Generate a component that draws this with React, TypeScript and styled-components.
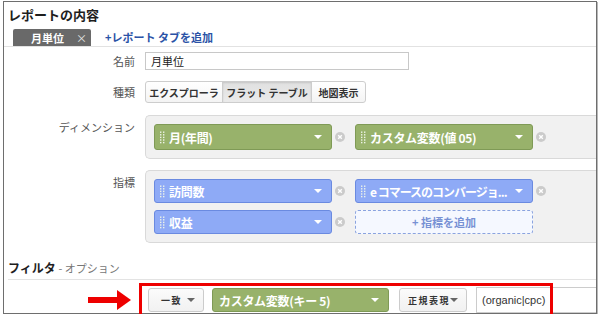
import React from "react";
import styled, { createGlobalStyle } from "styled-components";

const Global = createGlobalStyle`
  html, body { margin: 0; padding: 0; background: #fff; }
  body { font-family: "Noto Sans CJK JP", "Noto Sans", sans-serif; color: #222; }
  * { box-sizing: border-box; }
`;

const Frame = styled.div`
  width: 594px;
  height: 313px;
  margin: 1px 0 0 3px;
  border: 1px solid #6e6e6e;
  box-shadow: 1px 1px 0 #b8b8b8;
  display: flex;
  flex-direction: column;
`;

const Title = styled.div`
  padding: 3px 0 0 4px;
  font-size: 13px;
  font-weight: bold;
  line-height: 19px;
  color: #1e1e1e;
`;

const TabBar = styled.div`
  margin-top: 5px;
  height: 18px;
  display: flex;
  align-items: flex-end;
  padding-left: 9px;
  border-bottom: 1px solid #e2e2e2;
`;

const Tab = styled.div`
  width: 78px;
  height: 17px;
  background: #696969;
  color: #fff;
  font-size: 11px;
  font-weight: bold;
  display: flex;
  align-items: center;
  gap: 12px;
  padding-left: 18px;
  border-radius: 2px 2px 0 0;
`;

const TabClose = styled.span`
  color: #e4e4e4;
  font-weight: normal;
  font-size: 11px;
`;

const AddTab = styled.div`
  margin-left: 14px;
  line-height: 17px;
  font-size: 11px;
  font-weight: bold;
  color: #2a52a6;
`;

const Row = styled.div<{ $top: number; $align?: string }>`
  display: flex;
  align-items: ${(p) => p.$align || "center"};
  margin-top: ${(p) => p.$top}px;
`;

const Label = styled.div<{ $offset?: number }>`
  width: 141px;
  padding-right: 10px;
  text-align: right;
  font-size: 11px;
  line-height: 16px;
  color: #555;
  margin-top: ${(p) => p.$offset || 0}px;
`;

const NameInput = styled.input`
  width: 264px;
  height: 18px;
  border: 1px solid #c8c8c8;
  padding: 0 0 0 5px;
  font-family: inherit;
  font-size: 11px;
  color: #222;
  outline: none;
`;

const Segmented = styled.div`
  display: flex;
`;

const Seg = styled.div<{ $w: number; $on?: boolean }>`
  width: ${(p) => p.$w}px;
  height: 22px;
  border: 1px solid #cdcdcd;
  margin-left: -1px;
  &:first-child { margin-left: 0; border-radius: 3px 0 0 3px; }
  &:last-child { border-radius: 0 3px 3px 0; }
  background: ${(p) => (p.$on ? "linear-gradient(#e0e0e0, #ebebeb)" : "linear-gradient(#ffffff, #f4f4f4)")};
  box-shadow: ${(p) => (p.$on ? "inset 0 1px 2px rgba(0,0,0,0.12)" : "none")};
  font-size: 10px;
  font-weight: bold;
  color: #333;
  display: flex;
  align-items: center;
  justify-content: center;
  white-space: nowrap;
`;

const Panel = styled.div`
  flex: 1;
  background: #f1f1f1;
  border: 1px solid #d9d9d9;
  border-right: none;
  border-radius: 5px 0 0 5px;
  padding: 8px 0 8px 8px;
  display: grid;
  grid-template-columns: repeat(2, max-content);
  column-gap: 10px;
  row-gap: 7px;
`;

const Item = styled.div`
  display: flex;
  align-items: center;
  gap: 3px;
`;

const Chip = styled.div<{ $kind: "green" | "blue"; $h: number; $w?: number }>`
  width: ${(p) => p.$w || 178}px;
  height: ${(p) => p.$h}px;
  background: ${(p) => (p.$kind === "green" ? "#98b26b" : "#8eaaf6")};
  border: 1px solid ${(p) => (p.$kind === "green" ? "#7f9a56" : "#6a8ae0")};
  border-radius: 3px;
  display: flex;
  align-items: center;
  padding: 0 9px 0 5px;
  color: #fff;
  font-size: 12px;
  font-weight: bold;
`;

const ChipText = styled.span<{ $ml?: number; $ls?: number }>`
  flex: 1;
  min-width: 0;
  margin-left: ${(p) => (p.$ml === undefined ? 4 : p.$ml)}px;
  white-space: nowrap;
  overflow: hidden;
  letter-spacing: ${(p) => (p.$ls === undefined ? -0.3 : p.$ls)}px;
`;

const Caret = styled.span<{ $color?: string }>`
  width: 0;
  height: 0;
  border-left: 4px solid transparent;
  border-right: 4px solid transparent;
  border-top: 4px solid ${(p) => p.$color || "#fff"};
  flex: none;
`;

const AddBox = styled.div`
  width: 178px;
  height: 24px;
  border: 1px dashed #8aa3df;
  border-radius: 3px;
  background: #f5f8ff;
  color: #7791d4;
  font-size: 11px;
  font-weight: bold;
  display: flex;
  align-items: center;
  justify-content: center;
`;

const FilterHead = styled.div`
  margin: 16px 0 0 4px;
  line-height: 17px;
  padding-bottom: 2px;
  border-bottom: 1px solid #e3e3e3;
  font-size: 12px;
  font-weight: bold;
  color: #1e1e1e;
`;

const Option = styled.span`
  font-size: 11px;
  font-weight: normal;
  color: #777;
`;

const FilterRow = styled.div`
  position: relative;
  display: flex;
  align-items: center;
  padding-top: 7px;
  height: 33px;
`;

const ArrowWrap = styled.div`
  margin-left: 84px;
  margin-right: 17px;
  display: flex;
`;

const DropBtn = styled.div<{ $w: number; $ml: number }>`
  width: ${(p) => p.$w}px;
  height: 24px;
  margin-left: ${(p) => p.$ml}px;
  border: 1px solid #cccccc;
  border-radius: 3px;
  background: linear-gradient(#fbfbfb, #f1f1f1);
  font-size: 9px;
  font-weight: bold;
  letter-spacing: 1.5px;
  color: #333;
  display: flex;
  align-items: center;
  justify-content: space-between;
  padding: 0 8px 0 8px;
  white-space: nowrap;
`;

const FilterInput = styled.input`
  flex: 1;
  min-width: 0;
  height: 26px;
  margin-left: 9px;
  border: 1px solid #cccccc;
  border-right: none;
  padding: 0 0 0 5px;
  font-family: "Liberation Sans", Arial, sans-serif;
  font-size: 11px;
  color: #333;
  outline: none;
`;

const RedBox = styled.div`
  position: absolute;
  left: 135px;
  top: 3px;
  width: 414px;
  height: 34px;
  border: 3px solid #ee0000;
  pointer-events: none;
`;

const Handle = () => (
  <svg width="5" height="13" viewBox="0 0 5 13">
    {[0, 1, 2, 3, 4].map((r) =>
      [0, 1].map((c) => <rect key={`${r}-${c}`} x={c * 3} y={r * 2.6 + 0.5} width="1.4" height="1.4" fill="#eef3e8" />)
    )}
  </svg>
);

const Close = () => (
  <svg width="10" height="10" viewBox="0 0 10 10">
    <circle cx="5" cy="5" r="5" fill="#cbcbcb" />
    <path d="M3.2 3.2 L6.8 6.8 M6.8 3.2 L3.2 6.8" stroke="#fff" strokeWidth="1.4" />
  </svg>
);

const Arrow = () => (
  <svg width="43" height="20" viewBox="0 0 43 20">
    <rect x="0" y="7" width="31" height="6" fill="#ee0000" />
    <polygon points="29,0 43,10 29,20" fill="#ee0000" />
  </svg>
);

export default function App() {
  return (
    <>
      <Global />
      <Frame>
        <Title>レポートの内容</Title>
        <TabBar>
          <Tab>
            <span>月単位</span>
            <TabClose>×</TabClose>
          </Tab>
          <AddTab>+レポート タブを追加</AddTab>
        </TabBar>
        <Row $top={5}>
          <Label>名前</Label>
          <NameInput readOnly value="月単位" />
        </Row>
        <Row $top={11}>
          <Label>種類</Label>
          <Segmented>
            <Seg $w={78}>エクスプローラ</Seg>
            <Seg $w={90} $on>
              フラット テーブル
            </Seg>
            <Seg $w={55}>地図表示</Seg>
          </Segmented>
        </Row>
        <Row $top={12} $align="flex-start">
          <Label $offset={4}>ディメンション</Label>
          <Panel>
            <Item>
              <Chip $kind="green" $h={26}>
                <Handle />
                <ChipText>月(年間)</ChipText>
                <Caret />
              </Chip>
              <Close />
            </Item>
            <Item>
              <Chip $kind="green" $h={26}>
                <Handle />
                <ChipText>カスタム変数(値 05)</ChipText>
                <Caret />
              </Chip>
              <Close />
            </Item>
          </Panel>
        </Row>
        <Row $top={11} $align="flex-start">
          <Label $offset={4}>指標</Label>
          <Panel>
            <Item>
              <Chip $kind="blue" $h={24}>
                <Handle />
                <ChipText>訪問数</ChipText>
                <Caret />
              </Chip>
              <Close />
            </Item>
            <Item>
              <Chip $kind="blue" $h={24}>
                <Handle />
                <ChipText $ls={-1}>e コマースのコンバージョ...</ChipText>
                <Caret />
              </Chip>
              <Close />
            </Item>
            <Item>
              <Chip $kind="blue" $h={24}>
                <Handle />
                <ChipText>収益</ChipText>
                <Caret />
              </Chip>
              <Close />
            </Item>
            <Item>
              <AddBox>+ 指標を追加</AddBox>
            </Item>
          </Panel>
        </Row>
        <FilterHead>
          フィルタ <Option>- オプション</Option>
        </FilterHead>
        <FilterRow>
          <ArrowWrap>
            <Arrow />
          </ArrowWrap>
          <DropBtn $w={56} $ml={0}>
            <span style={{ marginLeft: 4 }}>一致</span>
            <Caret $color="#666" />
          </DropBtn>
          <Chip $kind="green" $h={24} $w={177} style={{ marginLeft: 8 }}>
            <ChipText $ml={1}>カスタム変数(キー 5)</ChipText>
            <Caret />
          </Chip>
          <DropBtn $w={68} $ml={10}>
            <span>正規表現</span>
            <Caret $color="#666" />
          </DropBtn>
          <FilterInput readOnly value="(organic|cpc)" />
          <RedBox />
        </FilterRow>
      </Frame>
    </>
  );
}
